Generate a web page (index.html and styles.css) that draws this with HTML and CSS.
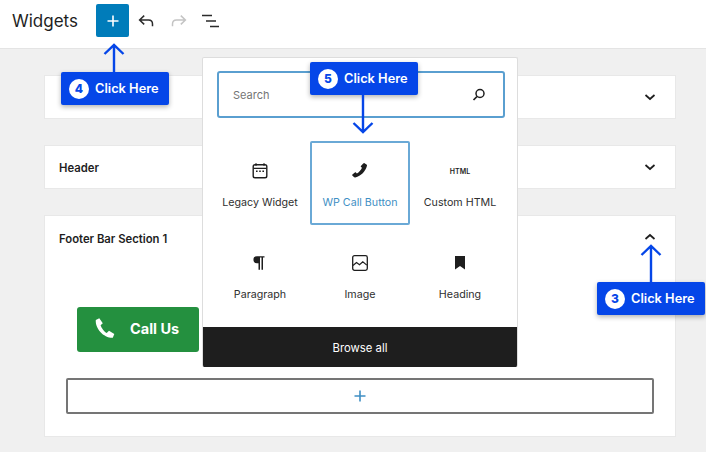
FILE: index.html
```html
<!DOCTYPE html>
<html lang="en">
<head>
<meta charset="utf-8">
<title>Widgets</title>
<link rel="stylesheet" href="styles.css">
</head>
<body>
<div class="app">
  <header class="topbar">
    <h1 class="title">Widgets</h1>
    <button class="add-btn" aria-label="Add block">
      <svg width="24" height="24" viewBox="0 0 24 24"><path d="M12 6.500v11M6.500 12h11" stroke="#fff" stroke-width="1.600" fill="none"/></svg>
    </button>
    <span class="tool">
      <svg width="24" height="24" viewBox="0 0 24 24"><path d="M10.200 6.600 5.600 11l4.600 4.400M5.800 11h8.700c2.400 0 4 1.600 4 4v2.200" stroke="#2b2b2b" stroke-width="1.500" fill="none"/></svg>
    </span>
    <span class="tool">
      <svg width="24" height="24" viewBox="0 0 24 24"><path d="M13.800 6.600 18.400 11l-4.600 4.400M18.200 11H9.500c-2.400 0-4 1.600-4 4v2.200" stroke="#c4c4c4" stroke-width="1.500" fill="none"/></svg>
    </span>
    <span class="tool tool-list">
      <svg width="24" height="24" viewBox="0 0 24 24"><path d="M3 6.500h10M7 12h10M11 17.500h9" stroke="#2b2b2b" stroke-width="1.600" fill="none"/></svg>
    </span>
  </header>

  <main class="canvas">
    <section class="card card-short">
      <svg class="chev" width="24" height="24" viewBox="0 0 24 24"><path d="M7.500 10l4.500 4 4.500-4" stroke="#1e1e1e" stroke-width="1.700" fill="none"/></svg>
    </section>
    <section class="card card-short">
      <span class="card-title">Header</span>
      <svg class="chev" width="24" height="24" viewBox="0 0 24 24"><path d="M7.500 10l4.500 4 4.500-4" stroke="#1e1e1e" stroke-width="1.700" fill="none"/></svg>
    </section>
    <section class="card card-open">
      <div class="card-head">
        <span class="card-title">Footer Bar Section 1</span>
        <svg class="chev" width="24" height="24" viewBox="0 0 24 24"><path d="M7.500 13l4.500-4 4.500 4" stroke="#1e1e1e" stroke-width="1.700" fill="none"/></svg>
      </div>
      <div class="call-btn">
        <svg width="24" height="24" viewBox="0 0 24 24"><path d="M7.300 2.200 3.800 4C3 12.500 11.500 22 20.800 21.800l1.500-3.900-5.300-3.200-2.300 2.400C12.300 15.700 9.400 12 8.600 9.200l2.200-2z" fill="#fff"/></svg>
        <span>Call Us</span>
      </div>
      <div class="appender">
        <svg width="24" height="24" viewBox="0 0 24 24"><path d="M12 6.500v11M6.500 12h11" stroke="#3f8fc4" stroke-width="1.600" fill="none"/></svg>
      </div>
    </section>
  </main>

  <aside class="popover">
    <div class="search">
      <span class="search-text">Search</span>
      <svg width="20" height="20" viewBox="0 0 20 20"><circle cx="11" cy="8.500" r="4" stroke="#1e1e1e" stroke-width="1.500" fill="none"/><path d="M8 11.500l-3.500 3.500" stroke="#1e1e1e" stroke-width="1.700"/></svg>
    </div>
    <div class="grid">
      <div class="item">
        <svg width="20" height="20" viewBox="0 0 20 20"><rect x="3.200" y="3.800" width="13.600" height="13" rx="1.800" stroke="#1e1e1e" stroke-width="1.400" fill="none"/><path d="M3.500 7.300h13" stroke="#1e1e1e" stroke-width="1.300"/><path d="M6 2.200v2.500M14 2.200v2.500" stroke="#1e1e1e" stroke-width="1.300"/><path d="M6 10.200h1.600M9.200 10.200h1.600M12.400 10.200H14" stroke="#1e1e1e" stroke-width="1.400"/></svg>
        <span>Legacy Widget</span>
      </div>
      <div class="item item-active">
        <svg width="20" height="20" viewBox="0 0 20 20"><path d="M13.200 2.600l1-.6 2.600 1.800c.3.300.3.700.1 1.200-1.400 5.300-5.700 10-11.600 11.400-.6.100-1.100 0-1.400-.3l-1.600-1.500c-.3-.4-.2-.7.100-1l2.500-2.100c.3-.2.700-.2 1 0l1 .9c2-1.100 4-3.200 5.100-5.700l-1-.8c-.3-.3-.3-.6-.1-1z" fill="#1e1e1e"/></svg>
        <span>WP Call Button</span>
      </div>
      <div class="item">
        <span class="html-icon">HTML</span>
        <span>Custom HTML</span>
      </div>
      <div class="item">
        <svg width="20" height="20" viewBox="0 0 20 20"><path d="M7 3.200h7.500v1.400H13v12.200h-1.500V4.600H10v12.200H8.500v-6.500H7a3.550 3.550 0 0 1 0-7.100z" fill="#1e1e1e"/></svg>
        <span>Paragraph</span>
      </div>
      <div class="item">
        <svg width="20" height="20" viewBox="0 0 20 20"><rect x="2.700" y="2.700" width="14.600" height="14.600" rx="1.800" stroke="#1e1e1e" stroke-width="1.300" fill="none"/><path d="M3 12.500l3.500-3 3 2.300 3.300-3 4 3.300" stroke="#1e1e1e" stroke-width="1.200" fill="none"/></svg>
        <span>Image</span>
      </div>
      <div class="item">
        <svg width="20" height="20" viewBox="0 0 20 20"><path d="M5 3h10v13.500l-5-3.500-5 3.500z" fill="#1e1e1e"/></svg>
        <span>Heading</span>
      </div>
    </div>
    <div class="browse">Browse all</div>
  </aside>

  <div class="note note-4"><b>4</b><span>Click Here</span></div>
  <svg class="arrow arrow-4" width="24" height="30" viewBox="0 0 24 30"><path d="M12 29V2M2.500 11 12 2l9.500 9" stroke="#0546e8" stroke-width="2.400" fill="none"/></svg>
  <div class="note note-5"><b>5</b><span>Click Here</span></div>
  <svg class="arrow arrow-5" width="24" height="40" viewBox="0 0 24 40"><path d="M12 0v37M2.500 28 12 37l9.500-9" stroke="#0546e8" stroke-width="2.400" fill="none"/></svg>
  <div class="note note-3"><b>3</b><span>Click Here</span></div>
  <svg class="arrow arrow-3" width="24" height="40" viewBox="0 0 24 40"><path d="M12 39V3M2.500 12 12 3l9.500 9" stroke="#0546e8" stroke-width="2.400" fill="none"/></svg>
</div>
</body>
</html>
```

FILE: styles.css
```css
* { box-sizing: border-box; }
html, body { margin: 0; padding: 0; }
body {
  font-family: Inter, "Liberation Sans", sans-serif;
  color: #1e1e1e;
  background: #f0f0f0;
}
.app {
  position: relative;
  width: 706px;
  height: 452px;
  overflow: hidden;
}
.topbar {
  height: 49px;
  background: #fff;
  border-bottom: 1px solid #e4e4e4;
  display: flex;
  align-items: center;
  padding: 0 0 7px 12px;
}
.title {
  margin: 1px 19px 0 0;
  font-size: 17px;
  font-weight: 400;
  width: 65px;
  white-space: nowrap;
}
.add-btn {
  width: 33px;
  height: 33px;
  padding: 0;
  border: 0;
  border-radius: 2px;
  background: #007cba;
  display: flex;
  align-items: center;
  justify-content: center;
}
.tool {
  width: 33px;
  height: 33px;
  display: flex;
  align-items: center;
  justify-content: center;
}
.tool-list { margin-left: -1px; }
.canvas {
  display: flex;
  flex-direction: column;
  gap: 26px;
  padding: 26px 30px 0 44px;
}
.card {
  background: #fff;
  border: 1px solid #e8e8e8;
}
.card-short {
  height: 44px;
  display: flex;
  align-items: center;
  justify-content: space-between;
  padding: 0 13px 0 14px;
}
.card-short:first-child { justify-content: flex-end; }
.card-title {
  font-size: 11.300px;
  font-weight: 600;
  margin-top: 1px;
}
.card-open {
  height: 222px;
  display: flex;
  flex-direction: column;
  padding: 10px 21px 0;
}
.card-head {
  display: flex;
  justify-content: space-between;
  align-items: center;
  margin: 0 -8px 0 -7px;
  height: 24px;
}
.call-btn {
  width: 122px;
  height: 45px;
  margin: 57px 0 0 11px;
  border-radius: 3px;
  background: #24903f;
  color: #fff;
  font-size: 14.500px;
  font-weight: 700;
  display: flex;
  align-items: center;
  gap: 14px;
  padding: 0 0 3px 15px;
}
.appender {
  height: 36px;
  margin-top: 26px;
  border: 2px solid #757575;
  border-radius: 2px;
  display: flex;
  align-items: center;
  justify-content: center;
}
.popover {
  position: absolute;
  left: 202px;
  top: 57px;
  width: 316px;
  height: 310px;
  background: #fff;
  border: 1px solid #ddd;
  border-bottom: 0;
  border-radius: 2px;
  overflow: hidden;
  display: flex;
  flex-direction: column;
}
.search {
  height: 47px;
  margin: 13px 12px 0 14px;
  border: 2px solid #5a9fd0;
  border-radius: 3px;
  display: flex;
  align-items: center;
  justify-content: space-between;
  padding: 0 14px 0 14px;
  font-size: 11px;
  color: #757575;
}
.grid {
  display: grid;
  grid-template-columns: repeat(3, 100px);
  grid-template-rows: 84px 84px;
  row-gap: 8px;
  margin: 23px 0 0 7px;
}
.item {
  display: flex;
  flex-direction: column;
  align-items: center;
  font-size: 10.700px;
  color: #2f2f2f;
  padding-top: 18px;
  gap: 15px;
  border: 2px solid transparent;
  white-space: nowrap;
}
.item-active {
  border-color: #6aa9d6;
  border-radius: 2px;
  color: #3f8fc4;
}
.html-icon {
  height: 20px;
  font-size: 7px;
  font-weight: 600;
  display: flex;
  align-items: center;
  color: #1e1e1e;
}
.browse {
  margin-top: auto;
  height: 40px;
  padding-top: 1px;
  background: #1e1e1e;
  color: #fff;
  font-size: 11.300px;
  display: flex;
  align-items: center;
  justify-content: center;
}
.note {
  position: absolute;
  width: 108px;
  height: 33px;
  background: #0546e8;
  border-radius: 2px;
  color: #fff;
  font-size: 12.800px;
  font-weight: 600;
  display: flex;
  align-items: center;
  gap: 6px;
  padding-left: 8px;
  box-shadow: 0 2px 5px rgba(0, 0, 0, .3);
}
.note b {
  width: 20px;
  height: 20px;
  border-radius: 50%;
  background: #fff;
  color: #0546e8;
  font-size: 12px;
  font-weight: 800;
  display: flex;
  align-items: center;
  justify-content: center;
}
.note-4 { left: 61px; top: 72px; }
.note-5 { left: 310px; top: 62px; }
.note-3 { left: 597px; top: 282px; }
.arrow { position: absolute; }
.arrow-4 { left: 102px; top: 43px; }
.arrow-5 { left: 351px; top: 95px; }
.arrow-3 { left: 639px; top: 243px; }
```
